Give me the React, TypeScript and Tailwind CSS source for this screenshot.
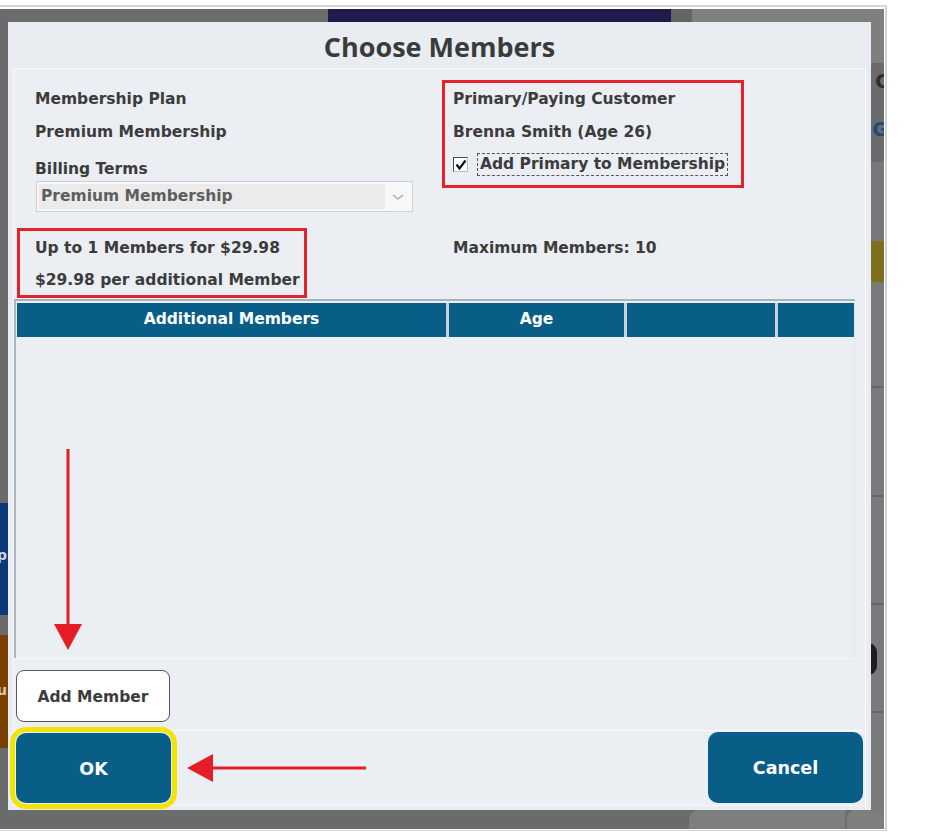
import React from "react";

const BODY = "font-['DejaVu_Sans',sans-serif] font-bold";

function Line({ children, className = "" }: { children: React.ReactNode; className?: string }) {
  return (
    <div className={`h-5 leading-5 text-[15.5px] text-[#3c3c3c] whitespace-nowrap ${className}`}>
      {children}
    </div>
  );
}

function Arrows() {
  // red annotation arrows drawn over the dialog
  return (
    <svg
      className="pointer-events-none absolute left-0 top-0"
      width="940"
      height="840"
      viewBox="0 0 940 840"
    >
      <line x1="68" y1="449" x2="68" y2="626" stroke="#e41e26" strokeWidth="3" />
      <polygon points="54,624 82,624 68,650" fill="#e41e26" />
      <line x1="211" y1="768" x2="366" y2="768" stroke="#e41e26" strokeWidth="3" />
      <polygon points="213,754 213,782 187,768" fill="#e41e26" />
    </svg>
  );
}

function Backdrop({ children }: { children: React.ReactNode }) {
  return (
    <div className="flex flex-col w-[884px] h-[820px] bg-[#6b6b6b]">
      {/* dimmed app strip behind the modal */}
      <div className="flex h-[13px] shrink-0">
        <div className="w-[328px] bg-[#6b6b6b]" />
        <div className="w-[343px] bg-[#221a4b]" />
        <div className="w-[21px] bg-[#656565]" />
        <div className="flex-1 bg-[#7f7f7f]" />
      </div>
      <div className="flex h-[788px] shrink-0">
        <div className="flex flex-col w-[8px] overflow-hidden">
          <div className="h-[481px] bg-[#6b6b6b]" />
          <div className="h-[112px] bg-[#0c3a78] text-[#c9d3e2] text-[14px] leading-[104px] font-['DejaVu_Sans',sans-serif] font-bold">
            <span className="-ml-[3px]">p</span>
          </div>
          <div className="h-[20px] bg-[#6b6b6b]" />
          <div className="h-[113px] bg-[#7b3f02] text-[#d9c4ad] text-[14px] leading-[110px] font-['DejaVu_Sans',sans-serif] font-bold">
            <span className="-ml-[3px]">u</span>
          </div>
          <div className="flex-1 bg-[#6b6b6b]" />
        </div>
        {children}
        <div className="flex flex-col w-[13px] overflow-hidden">
          <div className="h-[41px] bg-[#7f7f7f]" />
          <div className="h-[99px] bg-[#6b6b6b] font-['DejaVu_Sans',sans-serif] font-bold text-[20px]">
            <div className="h-[36px] leading-[36px] pl-[4px] text-[#2e2e2e]">C</div>
            <div className="h-[60px] leading-[60px] pl-[1px] text-[#1d4d78]">G</div>
          </div>
          <div className="h-[79px] bg-[#787878]" />
          <div className="h-[41px] bg-[#7d6f1b]" />
          <div className="h-[106px] bg-[#7a7a7a] border-b-2 border-[#666666]" />
          <div className="h-[109px] bg-[#7a7a7a] border-b-2 border-[#666666]" />
          <div className="h-[108px] bg-[#7a7a7a] border-b-2 border-[#666666]" />
          <div className="h-[108px] bg-[#7a7a7a] border-b-2 border-[#666666] relative">
            <div className="absolute -left-[12px] top-[38px] w-[18px] h-[32px] rounded-full bg-[#1e1e1e]" />
          </div>
          <div className="flex-1 bg-[#7a7a7a]" />
        </div>
      </div>
      <div className="flex h-[19px] shrink-0">
        <div className="w-[689px] bg-[#6b6b6b]" />
        <div className="w-[158px] bg-[#7e7e7e] rounded-tl-[10px] border-r-2 border-[#6f6f6f]" />
        <div className="flex-1 bg-[#7e7e7e] rounded-tl-[8px]" />
      </div>
    </div>
  );
}

function Select() {
  return (
    <div className="flex items-center w-[377px] h-[31px] ml-px border border-[#cfcfcf] bg-[#f7f7f7] p-[2px]">
      <div className="flex-1 h-full bg-[#ebebeb] flex items-center pl-[2px] text-[15.5px] text-[#5e5e5e] whitespace-nowrap">
        Premium Membership
      </div>
      <div className="w-[25px] h-full flex items-center justify-center">
        <svg width="12" height="6" viewBox="0 0 12 6">
          <path d="M1 1 L6 5 L11 1" fill="none" stroke="#a3a3a3" strokeWidth="1.3" />
        </svg>
      </div>
    </div>
  );
}

function Checkbox() {
  return (
    <div className="w-[15px] h-[15px] bg-white border border-[#4a4a4a] border-r-[#bdbdbd] border-b-[#bdbdbd] flex items-center justify-center">
      <svg width="12" height="12" viewBox="0 0 12 12">
        <path d="M1.5 5.5 L4.5 9.5 L10.5 1.5" fill="none" stroke="#111" strokeWidth="2.2" />
      </svg>
    </div>
  );
}

function Header() {
  const cell = "h-full bg-[#095e87] flex items-center justify-center text-white text-[15.5px]";
  return (
    <div className="flex gap-[3px] h-[34px] mt-[2px] ml-px bg-[#c9d2d9]">
      <div className={`${cell} w-[429px]`}>Additional Members</div>
      <div className={`${cell} w-[175px]`}>Age</div>
      <div className={`${cell} w-[148px]`} />
      <div className={`${cell} w-[76px]`} />
    </div>
  );
}

export default function App() {
  return (
    <div className={`relative w-[940px] h-[840px] bg-white pt-[5px] ${BODY}`}>
      <div className="w-[887px] border-t-2 border-r-2 border-b border-[#d3d3d3] pt-[2px] pr-px pb-px">
        <Backdrop>
          <div className="flex flex-col w-[863px] h-full bg-[#e9ecf1]">
            <div className="h-[46px] shrink-0 flex items-center justify-center pt-[4px] font-['Open_Sans',sans-serif] text-[27px] text-[#3b3b3b]">
              Choose Members
            </div>

            <div className="flex flex-col mx-[5px] h-[738px] border border-[#f6f8fa] bg-[#ebeef3]">
              {/* top: plan + primary customer */}
              <div className="flex h-[143px] shrink-0">
                <div className="flex flex-col w-[428px] pt-[20px] pl-[21px]">
                  <Line>Membership Plan</Line>
                  <Line className="mt-[13px]">Premium Membership</Line>
                  <Line className="mt-[17px]">Billing Terms</Line>
                  <div className="mt-[2px]">
                    <Select />
                  </div>
                </div>
                <div className="mt-[11px] w-[302px] h-[108px] border-[3px] border-[#e4222b] pl-[8px] pt-[6px]">
                  <Line>Primary/Paying Customer</Line>
                  <Line className="mt-[13px]">Brenna Smith (Age 26)</Line>
                  <div className="flex items-center h-[23px] mt-[11px]">
                    <Checkbox />
                    <div className="ml-[9px] h-[23px] flex items-center px-[2px] border border-dashed border-[#555555] text-[15.5px] text-[#3c3c3c] whitespace-nowrap">
                      Add Primary to Membership
                    </div>
                  </div>
                </div>
              </div>

              {/* pricing */}
              <div className="flex mt-[16px] h-[70px] shrink-0">
                <div className="ml-[3px] w-[290px] h-[70px] border-[3px] border-[#e4222b] pl-[15px] pt-[7px]">
                  <Line>Up to 1 Members for $29.98</Line>
                  <Line className="mt-[12px]">$29.98 per additional Member</Line>
                </div>
                <div className="ml-[146px] pt-[10px]">
                  <Line>Maximum Members: 10</Line>
                </div>
              </div>

              {/* members table */}
              <div className="flex flex-col mt-px mr-[10px] h-[360px] shrink-0 border-t-2 border-[#a9b4bd]">
                <div className="flex flex-col h-[358px]">
                  <div className="flex flex-col h-[357px] border-l-2 border-r border-[#a9b4bd] border-r-[#e2e7ec]">
                    <Header />
                  </div>
                  <div className="h-px bg-[#f4f6f9]" />
                </div>
              </div>

              <button className="mt-[11px] ml-[2px] w-[154px] h-[52px] shrink-0 pt-[3px] bg-white border-[1.5px] border-[#555555] rounded-[8px] text-[15.5px] text-[#3c3c3c]">
                Add Member
              </button>

              <div className="mt-[8px] h-px bg-[#f7f9fb]" />

              <div className="flex justify-between items-end h-[71px] mt-px px-[2px]">
                <button className="w-[155px] h-[70px] pt-[2px] bg-[#095e87] rounded-[10px] text-white text-[17.5px] outline-[5px] outline-solid outline-[#f0e500] outline-offset-[1px]">
                  OK
                </button>
                <button className="w-[155px] h-[71px] pt-[2px] bg-[#095e87] rounded-[10px] text-white text-[17.5px]">
                  Cancel
                </button>
              </div>
            </div>
          </div>
        </Backdrop>
      </div>
      <Arrows />
    </div>
  );
}
